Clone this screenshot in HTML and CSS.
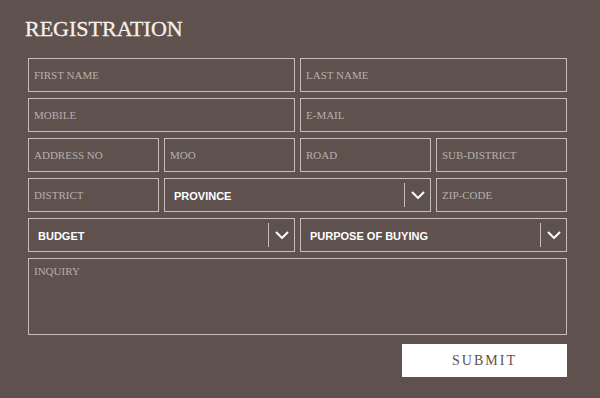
FILE: index.html
```html
<!DOCTYPE html>
<html lang="en">
<head>
    <meta charset="UTF-8">
    <meta name="viewport" content="width=device-width, initial-scale=1.0">
    <title>Registration</title>
    <link rel="stylesheet" href="styles.css">
</head>
<body>
    <form class="register">
        <h1>REGISTRATION</h1>

        <div class="row half">
            <input type="text" placeholder="FIRST NAME">
            <input type="text" placeholder="LAST NAME">
        </div>

        <div class="row half">
            <input type="text" placeholder="MOBILE">
            <input type="text" placeholder="E-MAIL">
        </div>

        <div class="row quarter">
            <input type="text" placeholder="ADDRESS NO">
            <input type="text" placeholder="MOO">
            <input type="text" placeholder="ROAD">
            <input type="text" placeholder="SUB-DISTRICT">
        </div>

        <div class="row quarter">
            <input type="text" placeholder="DISTRICT">
            <div class="select-box span-2">
                <select>
                    <option>PROVINCE</option>
                </select>
                <span class="arrow">
                    <svg width="14" height="8" viewBox="0 0 14 8"><path d="M1 1l6 6 6-6" fill="none" stroke="#fff" stroke-width="2"/></svg>
                </span>
            </div>
            <input type="text" placeholder="ZIP-CODE">
        </div>

        <div class="row half">
            <div class="select-box">
                <select>
                    <option>BUDGET</option>
                </select>
                <span class="arrow">
                    <svg width="14" height="8" viewBox="0 0 14 8"><path d="M1 1l6 6 6-6" fill="none" stroke="#fff" stroke-width="2"/></svg>
                </span>
            </div>
            <div class="select-box">
                <select>
                    <option>PURPOSE OF BUYING</option>
                </select>
                <span class="arrow">
                    <svg width="14" height="8" viewBox="0 0 14 8"><path d="M1 1l6 6 6-6" fill="none" stroke="#fff" stroke-width="2"/></svg>
                </span>
            </div>
        </div>

        <textarea placeholder="INQUIRY"></textarea>

        <div class="actions">
            <button type="button">SUBMIT</button>
        </div>
    </form>
</body>
</html>
```

FILE: styles.css
```css
body {
    margin: 0;
    background-color: #5e514e;
    font-family: 'Liberation Serif', serif;
}
.register {
    padding: 17px 33px 0 28px;
}
h1 {
    margin: 0 0 17px -3px;
    font-size: 22px;
    font-weight: normal;
    color: #f6f1ea;
    line-height: 24px;
    -webkit-text-stroke: 0.3px #f6f1ea;
}
.row {
    display: grid;
    gap: 5px;
    margin-bottom: 6px;
}
.half {
    grid-template-columns: 1fr 1fr;
}
.quarter {
    grid-template-columns: repeat(4, 1fr);
}
.span-2 {
    grid-column: span 2;
}
input, textarea, select {
    box-sizing: border-box;
    width: 100%;
    margin: 0;
    background-color: transparent;
    border: 1px solid #c7bdb9;
    color: #fff;
    outline: none;
    border-radius: 0;
}
input, textarea {
    font-family: 'Liberation Serif', serif;
    font-size: 11px;
    padding: 0 5px;
}
input {
    height: 34px;
}
input::placeholder, textarea::placeholder {
    color: #b9afab;
}
textarea {
    display: block;
    height: 77px;
    padding-top: 6px;
    resize: none;
}
.select-box {
    position: relative;
}
select {
    height: 34px;
    appearance: none;
    -webkit-appearance: none;
    padding: 1px 9px 0;
    font-family: 'Liberation Sans', Arial, sans-serif;
    font-size: 11px;
    font-weight: bold;
}
.arrow {
    position: absolute;
    top: 5px;
    right: 0;
    bottom: 5px;
    width: 26px;
    border-left: 1px solid #c7bdb9;
    display: flex;
    align-items: center;
    justify-content: center;
    pointer-events: none;
}
.actions {
    display: flex;
    justify-content: flex-end;
    margin-top: 9px;
}
button {
    width: 165px;
    height: 33px;
    background-color: #fff;
    border: none;
    color: #5e514e;
    font-family: 'Liberation Serif', serif;
    font-size: 14px;
    letter-spacing: 2px;
    cursor: pointer;
}
```
